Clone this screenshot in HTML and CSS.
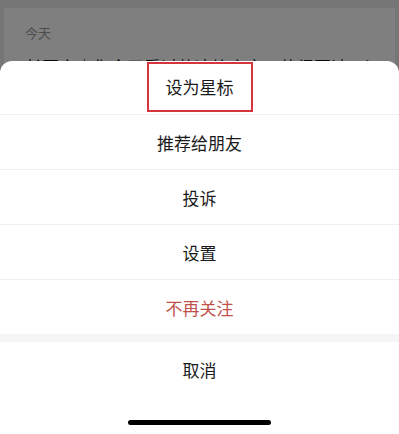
FILE: index.html
```html
<!DOCTYPE html>
<html lang="zh-CN">
<head>
    <meta charset="UTF-8">
    <meta name="viewport" content="width=device-width, initial-scale=1.0">
    <title>操作菜单</title>
    <link rel="stylesheet" href="styles.css">
</head>
<body>
    <div class="page">
        <div class="feed-card">
            <div class="feed-date">今天</div>
            <div class="feed-title">长图文｜你今天看过的这篇文章，值得再读一遍</div>
        </div>
    </div>

    <div class="mask"></div>

    <div class="action-sheet">
        <div class="sheet-item"><span class="marked">设为星标</span></div>
        <div class="sheet-item">推荐给朋友</div>
        <div class="sheet-item">投诉</div>
        <div class="sheet-item">设置</div>
        <div class="sheet-item danger">不再关注</div>
        <div class="sheet-gap"></div>
        <div class="sheet-item cancel">取消</div>
        <div class="home-bar"><span class="home-indicator"></span></div>
    </div>
</body>
</html>
```

FILE: styles.css
```css
* {
    margin: 0;
    padding: 0;
    box-sizing: border-box;
}

html, body {
    height: 100%;
    overflow: hidden;
}

body {
    font-family: "Noto Sans CJK SC", "Noto Sans", sans-serif;
    background: #ededed;
    position: relative;
}

.page {
    padding: 8px 4px 0;
    height: 100%;
}

.feed-card {
    background: #ffffff;
    height: 100%;
    padding: 15px 21px 0;
}

.feed-date {
    font-size: 13px;
    line-height: 20px;
    color: #999;
}

.feed-title {
    margin-top: 12px;
    font-size: 17px;
    line-height: 24px;
    color: #111;
    white-space: nowrap;
    overflow: hidden;
}

.mask {
    position: absolute;
    inset: 0;
    background: rgba(0, 0, 0, 0.5);
}

.action-sheet {
    position: absolute;
    left: 0;
    right: 0;
    bottom: 0;
    height: 373px;
    background: #fff;
    border-radius: 12px 12px 0 0;
    overflow: hidden;
}

.sheet-item {
    height: 55px;
    border-bottom: 1px solid #f0f0f0;
    display: flex;
    align-items: center;
    justify-content: center;
    font-size: 17px;
    color: #1a1a1a;
}

.sheet-item:first-child {
    height: 54px;
}

.sheet-item.danger {
    color: #c0524a;
    border-bottom: none;
    height: 54px;
}

.sheet-gap {
    height: 8px;
    background: #f5f5f5;
}

.sheet-item.cancel {
    border-bottom: none;
    height: 54px;
}

.marked {
    display: inline-block;
    border: 2px solid #d8343f;
    padding: 0 17px;
    line-height: 46px;
    margin-top: -1px;
}

.home-bar {
    display: flex;
    justify-content: center;
    padding-top: 24px;
}

.home-indicator {
    width: 143px;
    height: 5px;
    border-radius: 3px;
    background: #000;
}
```
